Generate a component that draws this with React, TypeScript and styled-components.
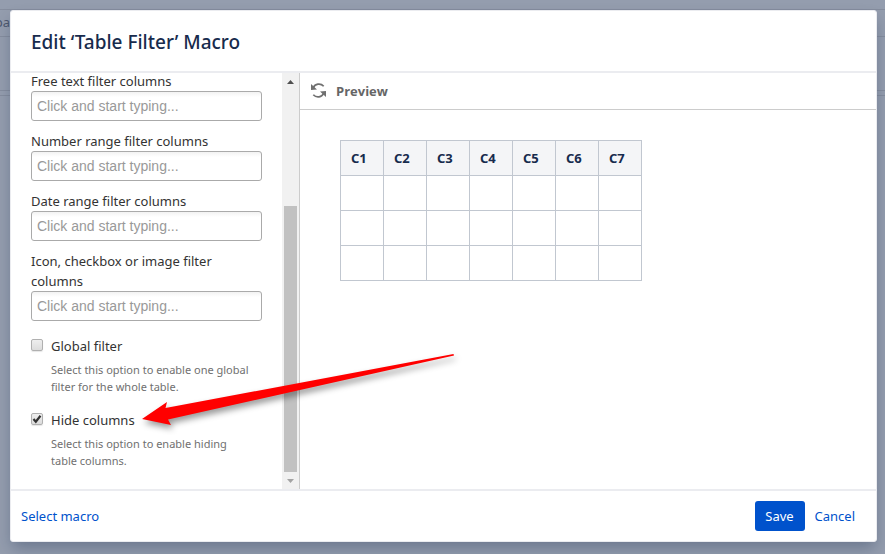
import React, { useState } from "react";
import styled, { createGlobalStyle } from "styled-components";

const GlobalStyle = createGlobalStyle`
  *, *::before, *::after { box-sizing: border-box; }
  html, body, #root { height: 100%; }
  body {
    margin: 0;
    overflow: hidden;
    background: #949dae;
    color: #333;
    font-family: "Noto Sans", "Open Sans", sans-serif;
    font-size: 13px;
    line-height: 20px;
  }
`;

const Page = styled.div`
  position: relative;
  height: 100%;
  padding: 10px 8px 12px 10px;
`;

const Backdrop = styled.div`
  position: absolute;
  inset: 0;
  display: flex;
  flex-direction: column;
  color: #4d586e;
  font-size: 13px;
`;

const BackdropStrip = styled.div<{ $height: number }>`
  height: ${(p) => p.$height}px;
  padding-top: 2px;
  border-bottom: 1px solid #858d9e;
  white-space: nowrap;
`;

const BackdropText = styled.span`
  display: block;
  width: 10px;
  overflow: hidden;
  direction: rtl;
`;

const Dialog = styled.section`
  position: relative;
  display: flex;
  flex-direction: column;
  height: 100%;
  border: 1px solid #ebecf0;
  border-radius: 3px;
  background: #fff;
  box-shadow: 0 8px 16px -2px rgba(9, 30, 66, 0.3);
`;

const Header = styled.header`
  padding: 16px 20px 14px;
  border-bottom: 2px solid #ebecf0;
`;

const Title = styled.h2`
  margin: 0;
  color: #172b4d;
  font-size: 19px;
  line-height: 30px;
  font-weight: 500;
`;

const Body = styled.div`
  display: flex;
  flex: 1;
  min-height: 0;
`;

const Sidebar = styled.div`
  display: flex;
  flex: 0 0 289px;
  border-right: 1px solid #ccc;
`;

const Form = styled.form`
  flex: 1;
  margin-top: -2px;
  padding: 0 20px;
  overflow: hidden;
`;

const Field = styled.div`
  display: flex;
  flex-direction: column;
  margin-bottom: 10px;
`;

const FieldLabel = styled.label`
  line-height: 20px;
`;

const TextInput = styled.input`
  height: 30px;
  width: 100%;
  padding: 0 5px;
  border: 1px solid #aaa;
  border-radius: 3px;
  background: linear-gradient(#f2f2f2 0, #fff 5px);
  font-family: "Liberation Sans", Arial, sans-serif;
  font-size: 14px;
  color: #333;
  outline: none;
  &::placeholder { color: #999; opacity: 1; }
`;

const Option = styled.div`
  display: grid;
  grid-template-columns: 12px 1fr;
  column-gap: 8px;
  row-gap: 5px;
  align-items: center;
  margin: 15px 0 15px;
`;

const Checkbox = styled.input`
  appearance: none;
  width: 12px;
  height: 12px;
  margin: 0 0 2px;
  border: 1px solid #b0b0b0;
  border-radius: 2px;
  background: linear-gradient(#eee, #dcdcdc);
  box-shadow: 0 1px 1px rgba(0, 0, 0, 0.1);
  &:checked {
    background:
      url("data:image/svg+xml,%3Csvg xmlns='http://www.w3.org/2000/svg' viewBox='0 0 10 10'%3E%3Cpath d='M1.5 5l2.3 2.7L8.5 1.7' fill='none' stroke='%23333' stroke-width='2.2'/%3E%3C/svg%3E") center / 10px 10px no-repeat,
      linear-gradient(#eee, #dcdcdc);
  }
`;

const Hint = styled.p`
  grid-column: 2;
  margin: 0;
  padding-right: 10px;
  color: #707070;
  font-size: 11px;
  line-height: 17px;
`;

const ScrollTrack = styled.div`
  display: flex;
  flex-direction: column;
  flex: 0 0 17px;
  align-items: center;
  background: #f1f1f1;
`;

const ScrollButton = styled.button`
  display: flex;
  align-items: center;
  justify-content: center;
  width: 17px;
  height: 17px;
  padding: 0;
  border: 0;
  background: none;
`;

const ScrollSpacer = styled.div`
  flex: 116;
`;

const ScrollThumb = styled.div`
  flex: 266;
  width: 13px;
  background: #c1c1c1;
`;

const Preview = styled.div`
  flex: 1;
  min-width: 0;
`;

const PreviewBar = styled.div`
  display: flex;
  align-items: center;
  gap: 8px;
  height: 37px;
  padding: 0 10px;
  border-bottom: 1px solid #ccc;
`;

const RefreshButton = styled.button`
  display: flex;
  width: 18px;
  height: 18px;
  padding: 0;
  border: 0;
  background: none;
`;

const PreviewTitle = styled.h3`
  margin: 0;
  color: #666;
  font-family: "Open Sans", sans-serif;
  font-size: 13px;
  line-height: 20px;
  font-weight: 700;
`;

const PreviewTable = styled.table`
  margin: 30px 40px;
  border-collapse: collapse;
  table-layout: fixed;
  width: 302px;
  color: #172b4d;
  th, td {
    height: 35px;
    padding: 0 10px;
    border: 1px solid #c1c7d0;
    text-align: left;
  }
  th {
    background: #f4f5f7;
    font-size: 13px;
    font-weight: 700;
  }
`;

const Footer = styled.footer`
  display: flex;
  align-items: center;
  gap: 10px;
  padding: 10px 21px 10px 10px;
  border-top: 2px solid #ebecf0;
`;

const FooterLink = styled.a`
  color: #0052cc;
  text-decoration: none;
`;

const SaveButton = styled.button`
  height: 30px;
  width: 50px;
  margin-left: auto;
  padding: 0;
  border: 0;
  border-radius: 3px;
  background: #0052cc;
  color: #fff;
  font: inherit;
`;

const Arrow = styled.svg`
  position: absolute;
  left: 119px;
  top: 329px;
  width: 340px;
  height: 100px;
  pointer-events: none;
  filter: drop-shadow(2px 4px 3px rgba(0, 0, 0, 0.4));
`;

const fields = [
  "Free text filter columns",
  "Number range filter columns",
  "Date range filter columns",
  "Icon, checkbox or image filter columns",
];

const columns = ["C1", "C2", "C3", "C4", "C5", "C6", "C7"];

type OptionRowProps = { id: string; label: string; hint: string; initial: boolean };

function OptionRow({ id, label, hint, initial }: OptionRowProps) {
  const [checked, setChecked] = useState(initial);
  return (
    <Option>
      <Checkbox
        id={id}
        type="checkbox"
        checked={checked}
        onChange={(e) => setChecked(e.target.checked)}
        aria-describedby={`${id}-hint`}
      />
      <FieldLabel htmlFor={id}>{label}</FieldLabel>
      <Hint id={`${id}-hint`}>{hint}</Hint>
    </Option>
  );
}

export default function App() {
  return (
    <Page>
      <GlobalStyle />
      <Backdrop aria-hidden="true">
        <BackdropStrip $height={10} />
        <BackdropStrip $height={27}>
          <BackdropText>pa</BackdropText>
        </BackdropStrip>
        <BackdropStrip $height={54} />
        <BackdropStrip $height={5} />
      </Backdrop>
      <Dialog role="dialog" aria-labelledby="dialog-title">
        <Header>
          <Title id="dialog-title">Edit ‘Table Filter’ Macro</Title>
        </Header>
        <Body>
          <Sidebar>
            <Form>
              {fields.map((label, i) => (
                <Field key={label}>
                  <FieldLabel htmlFor={`field-${i}`}>{label}</FieldLabel>
                  <TextInput id={`field-${i}`} placeholder="Click and start typing..." />
                </Field>
              ))}
              <OptionRow
                id="global-filter"
                label="Global filter"
                hint="Select this option to enable one global filter for the whole table."
                initial={false}
              />
              <OptionRow
                id="hide-columns"
                label="Hide columns"
                hint="Select this option to enable hiding table columns."
                initial={true}
              />
            </Form>
            <ScrollTrack>
              <ScrollButton type="button" aria-label="Scroll up">
                <svg width="7" height="4" viewBox="0 0 7 4"><path d="M0 4L3.5 0 7 4z" fill="#505050" /></svg>
              </ScrollButton>
              <ScrollSpacer />
              <ScrollThumb />
              <ScrollButton type="button" aria-label="Scroll down">
                <svg width="7" height="4" viewBox="0 0 7 4"><path d="M0 0h7L3.5 4z" fill="#a3a3a3" /></svg>
              </ScrollButton>
            </ScrollTrack>
          </Sidebar>
          <Preview>
            <PreviewBar>
              <RefreshButton type="button" aria-label="Refresh preview">
                <svg width="18" height="18" viewBox="0 0 18 18" fill="none" stroke="#707070" strokeWidth="1.7">
                  <path d="M3.200 5.800C5 1.600 10.500 .700 13.700 4.200M13.800 11.200C12 15.400 6.500 16.300 3.300 12.800" />
                  <path d="M1 2v6l6-.6zM16 15V9l-6 .6z" fill="#707070" stroke="none" />
                </svg>
              </RefreshButton>
              <PreviewTitle>Preview</PreviewTitle>
            </PreviewBar>
            <PreviewTable>
              <thead>
                <tr>{columns.map((c) => <th key={c} scope="col">{c}</th>)}</tr>
              </thead>
              <tbody>
                {[0, 1, 2].map((r) => (
                  <tr key={r}>{columns.map((c) => <td key={c} />)}</tr>
                ))}
              </tbody>
            </PreviewTable>
          </Preview>
        </Body>
        <Footer>
          <FooterLink href="#select">Select macro</FooterLink>
          <SaveButton type="button">Save</SaveButton>
          <FooterLink href="#cancel">Cancel</FooterLink>
        </Footer>
        <Arrow viewBox="0 0 340 100" aria-hidden="true">
          <path d="M12 79L37 62 35.500 68 323.500 14 324 15.500 38 79.500 41 85z" fill="#f00" />
        </Arrow>
      </Dialog>
    </Page>
  );
}
